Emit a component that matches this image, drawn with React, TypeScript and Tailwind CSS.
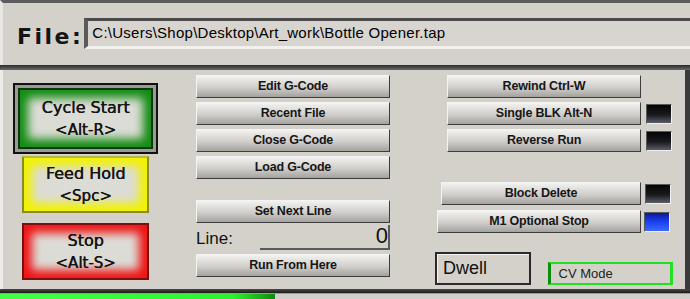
const sans = "font-['Liberation_Sans',Arial,sans-serif]";
const dejavu = "font-['DejaVu_Sans',Verdana,sans-serif]";

function GrayButton({ label, className = '' }: { label: string; className?: string }) {
  return (
    <div
      className={`flex h-[23px] items-center justify-center border border-t-[#f4f4f4] border-l-[#f4f4f4] border-b-[#3c3c3c] border-r-[#3c3c3c] bg-[linear-gradient(#f2f2f0,#d0cecb_55%,#a4a29e)] text-[12.5px] font-bold tracking-[-0.2px] text-[#161616] ${sans} ${className}`}
    >
      {label}
    </div>
  );
}

function Led({ on = false, className = '' }: { on?: boolean; className?: string }) {
  return (
    <div
      className={`h-[20px] w-[26px] border border-t-[#5a5a5a] border-l-[#5a5a5a] border-b-[#f0f0f0] border-r-[#f0f0f0] ${
        on
          ? 'bg-[linear-gradient(#0a1a90,#1a3cf0_45%,#3a6aff)]'
          : 'bg-[linear-gradient(#050505,#1a1a1e_55%,#5a5c66)]'
      } ${className}`}
    />
  );
}

function BigButton({
  top,
  bottom,
  glow,
  edge,
  active = false,
}: {
  top: string;
  bottom: string;
  glow: string;
  edge: string;
  active?: boolean;
}) {
  return (
    <div className={active ? 'border-2 border-[#111] bg-[#9a9a96] p-[3px]' : 'px-[9px]'}>
      <div
        className={`flex flex-col items-center justify-center border-2 ${edge} ${glow} ${
          active ? 'h-[61px] w-[135px]' : 'h-[57px] w-[127px]'
        } bg-[#dcdcd6] text-[16px] leading-[22px] text-[#141414] [text-shadow:0.5px_0_0_#141414] ${dejavu}`}
      >
        <span>{top}</span>
        <span className="text-[15px]">{bottom}</span>
      </div>
    </div>
  );
}

export default function App() {
  return (
    <div className="flex h-[299px] w-[690px] flex-col overflow-hidden bg-[#d4d1cb]">
      {/* file row */}
      <div className="flex h-[65px] shrink-0 items-start border-t-[3px] border-t-[#5c5c5c] border-l-[3px] border-l-[#e8e6e2] bg-[#d4d1cb] pt-[15px]">
        <div className={`ml-[14px] mt-[2px] text-[22px] font-bold tracking-[2.5px] text-[#141414] ${dejavu}`}>File:</div>
        <div className="ml-[1px] flex h-[31px] flex-1 items-center border-t-[3px] border-l-[4px] border-t-[#4a4a4a] border-l-[#5a5a5a] border-b-[3px] border-b-[#f2f1ee] bg-[#d8d5d0] pl-[4px]">
          <span className={`text-[15px] tracking-[0.25px] text-black ${sans}`}>
            C:\Users\Shop\Desktop\Art_work\Bottle Opener.tap
          </span>
        </div>
      </div>

      {/* separator */}
      <div className="h-[5px] shrink-0 bg-[linear-gradient(#2a2a2a,#6a6a6a)]" />

      {/* main panel */}
      <div className="flex h-[219px] shrink-0 border-l-[3px] border-l-[#ecebe8] border-r-[5px] border-r-[#3a3a3a] bg-[#d4d1cb]">
        <div className="ml-[10px] mt-[13px] flex w-[146px] flex-col items-start gap-[1px]">
          <BigButton
            top="Cycle Start"
            bottom="<Alt-R>"
            active
            edge="border-[#0c3a0c]"
            glow="shadow-[inset_0_0_10px_8px_#148c14]"
          />
          <div className="mt-[1px]">
            <BigButton
              top="Feed Hold"
              bottom="<Spc>"
              edge="border-[#8a8a2a] border-t-[#b8b840]"
              glow="shadow-[inset_0_0_10px_8px_#f2f200]"
            />
          </div>
          <div className="mt-[9px]">
            <BigButton
              top="Stop"
              bottom="<Alt-S>"
              edge="border-[#7a1010]"
              glow="shadow-[inset_0_0_10px_8px_#ee1414]"
            />
          </div>
        </div>

        <div className="ml-[37px] mt-[5px] flex w-[194px] flex-col">
          <GrayButton label="Edit G-Code" />
          <GrayButton label="Recent File" className="mt-[4px]" />
          <GrayButton label="Close G-Code" className="mt-[4px]" />
          <GrayButton label="Load G-Code" className="mt-[4px]" />
          <GrayButton label="Set Next Line" className="mt-[21px]" />
          <div className="mt-[2px] flex h-[25px] items-end">
            <span className={`mb-[1px] text-[17px] leading-[20px] text-[#111] ${sans}`}>Line:</span>
            <div className={`ml-[27px] flex h-[25px] w-[134px] items-end justify-end border-b-[2px] border-r-[2px] border-b-[#5a5a5a] border-r-[#5a5a5a] text-[22px] leading-[24px] text-[#111] ${sans}`}>
              0
            </div>
          </div>
          <GrayButton label="Run From Here" className="mt-[4px]" />
        </div>

        <div className="ml-[45px] mt-[5px] flex w-[238px] flex-col">
          <div className="flex items-center">
            <GrayButton label="Rewind Ctrl-W" className="ml-[12px] w-[194px]" />
          </div>
          <div className="mt-[4px] flex items-center">
            <GrayButton label="Single BLK Alt-N" className="ml-[12px] w-[194px]" />
            <Led className="ml-[5px]" />
          </div>
          <div className="mt-[4px] flex items-center">
            <GrayButton label="Reverse Run" className="ml-[12px] w-[194px]" />
            <Led className="ml-[5px]" />
          </div>
          <div className="mt-[30px] flex items-center">
            <GrayButton label="Block Delete" className="ml-[6px] w-[200px]" />
            <Led className="ml-[4px]" />
          </div>
          <div className="mt-[5px] flex items-center">
            <GrayButton label="M1 Optional Stop" className="ml-[2px] w-[204px]" />
            <Led on className="ml-[3px]" />
          </div>
          <div className="mt-[19px] flex items-end">
            <div className={`flex h-[33px] w-[96px] items-center border-2 border-[#2a2a2a] pl-[6px] text-[18px] text-[#111] ${sans} shadow-[inset_1px_1px_0_#f4f4f4]`}>
              Dwell
            </div>
            <div className={`ml-[17px] flex h-[23px] w-[126px] items-center border-2 border-[#22e022] border-r-[3px] border-l-[3px] border-l-[#0c8c0c] pl-[8px] text-[13px] text-[#222] ${sans}`}>
              CV Mode
            </div>
          </div>
        </div>
      </div>

      {/* bottom strip */}
      <div className="h-[4px] shrink-0 bg-[linear-gradient(#4a4a4a,#1a1a1a)]" />
      <div className="flex flex-1 border-t border-t-[#9a9a9a] bg-[#d0cfcb]">
        <div className="w-[275px] bg-[linear-gradient(90deg,#48ff48,#30f030_85%,#0e8a0e)]" />
      </div>
    </div>
  );
}
